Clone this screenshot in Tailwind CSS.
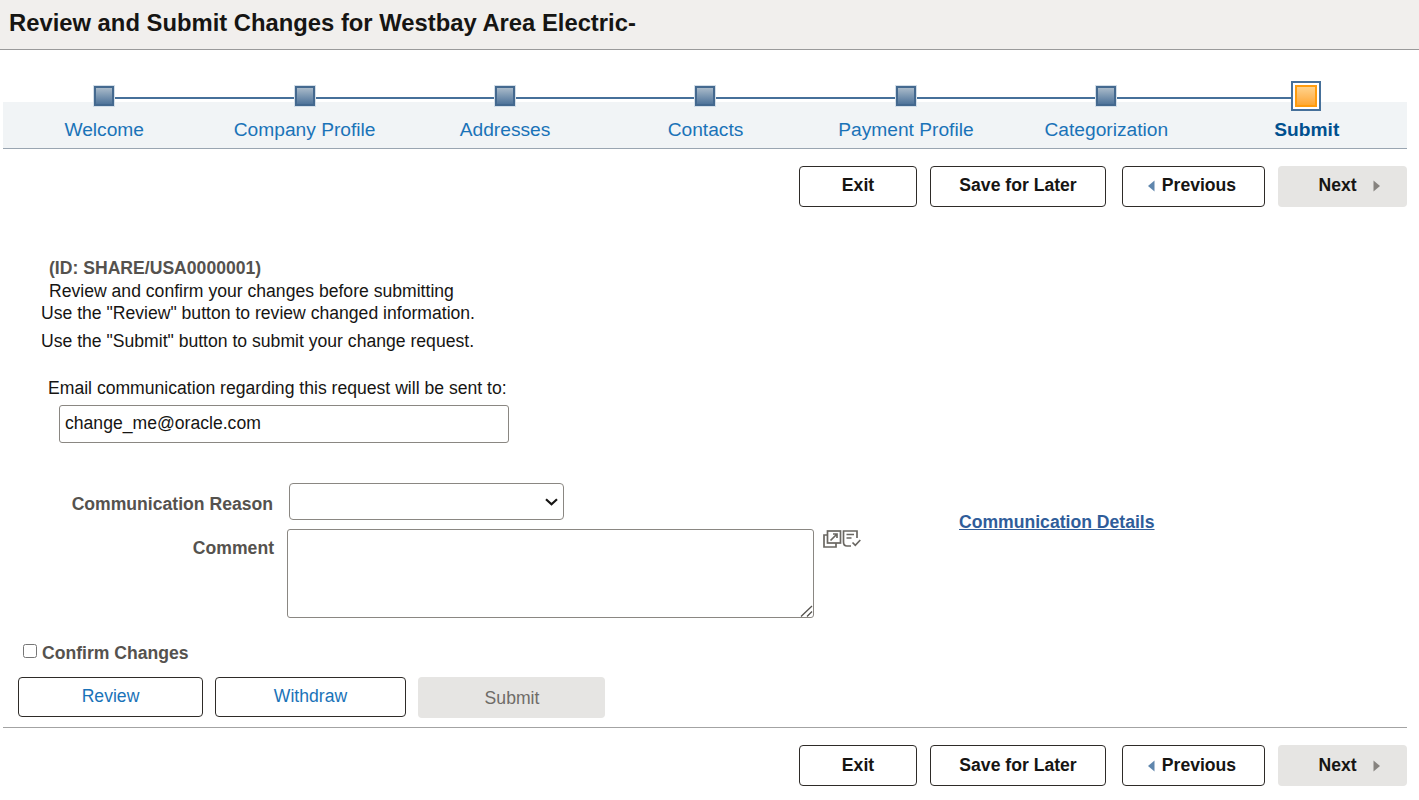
<!DOCTYPE html>
<html>
<head>
<meta charset="utf-8">
<script src="https://cdn.jsdelivr.net/npm/@tailwindcss/browser@4"></script>
</head>
<body class="bg-white font-['Liberation_Sans',Arial,sans-serif] text-[17.6px] text-[#161513] overflow-hidden">
<div class="w-[1419px] h-[800px] overflow-hidden">
  <header class="h-[50px] bg-[#f1efed] border-b border-[#9a9a9a] pl-[9px] pt-[8px]">
    <h1 class="text-[23.8px] leading-[30px] font-bold text-[#161513]">Review and Submit Changes for Westbay Area Electric-</h1>
  </header>

  <nav class="relative mt-[31px] ml-[3px] w-[1404px] h-[68px]">
    <div class="absolute left-0 right-0 top-[21px] bottom-0 bg-[#f1f4f6] border-b border-[#9aa5b1]"></div>
    <div class="absolute left-[101px] w-[1203px] top-[16px] h-[2px] bg-[#46709a]"></div>
    <ol class="relative grid grid-cols-7 ml-[1px] h-full">
      <li class="flex flex-col items-center"><span class="mt-[4px] w-[22px] h-[22px] border border-[#d3dee8] bg-[#44698f] p-[2px]"><span class="block w-full h-full bg-gradient-to-b from-[#a9bac9] to-[#4f749a]"></span></span><a class="mt-[12px] leading-[22px] text-[19.2px] text-[#1a73b8]">Welcome</a></li>
      <li class="flex flex-col items-center"><span class="mt-[4px] w-[22px] h-[22px] border border-[#d3dee8] bg-[#44698f] p-[2px]"><span class="block w-full h-full bg-gradient-to-b from-[#a9bac9] to-[#4f749a]"></span></span><a class="mt-[12px] leading-[22px] text-[19.2px] text-[#1a73b8]">Company Profile</a></li>
      <li class="flex flex-col items-center"><span class="mt-[4px] w-[22px] h-[22px] border border-[#d3dee8] bg-[#44698f] p-[2px]"><span class="block w-full h-full bg-gradient-to-b from-[#a9bac9] to-[#4f749a]"></span></span><a class="mt-[12px] leading-[22px] text-[19.2px] text-[#1a73b8]">Addresses</a></li>
      <li class="flex flex-col items-center"><span class="mt-[4px] w-[22px] h-[22px] border border-[#d3dee8] bg-[#44698f] p-[2px]"><span class="block w-full h-full bg-gradient-to-b from-[#a9bac9] to-[#4f749a]"></span></span><a class="mt-[12px] leading-[22px] text-[19.2px] text-[#1a73b8]">Contacts</a></li>
      <li class="flex flex-col items-center"><span class="mt-[4px] w-[22px] h-[22px] border border-[#d3dee8] bg-[#44698f] p-[2px]"><span class="block w-full h-full bg-gradient-to-b from-[#a9bac9] to-[#4f749a]"></span></span><a class="mt-[12px] leading-[22px] text-[19.2px] text-[#1a73b8]">Payment Profile</a></li>
      <li class="flex flex-col items-center"><span class="mt-[4px] w-[22px] h-[22px] border border-[#d3dee8] bg-[#44698f] p-[2px]"><span class="block w-full h-full bg-gradient-to-b from-[#a9bac9] to-[#4f749a]"></span></span><a class="mt-[12px] leading-[22px] text-[19.2px] text-[#1a73b8]">Categorization</a></li>
      <li class="flex flex-col items-center"><span class="-ml-[2px] w-[30px] h-[30px] border-[2px] border-[#46709a] bg-white p-[2px]"><span class="block w-full h-full border-[2px] border-[#ff9c0e] bg-gradient-to-b from-[#ffd28a] to-[#ffa82f]"></span></span><a class="mt-[8px] leading-[22px] text-[19.2px] font-bold text-[#00508f]">Submit</a></li>
    </ol>
  </nav>

  <div class="flex justify-end pr-[12px] mt-[17px] h-[41px] font-bold text-[#161513] text-[17.6px]">
    <button class="w-[118px] pb-[2px] rounded-[4px] border border-[#2e2b28] bg-white">Exit</button>
    <button class="ml-[13px] w-[176px] pb-[2px] rounded-[4px] border border-[#2e2b28] bg-white">Save for Later</button>
    <button class="ml-[16px] w-[143px] pb-[2px] pr-[4px] rounded-[4px] border border-[#2e2b28] bg-white flex items-center justify-center gap-[7px]"><svg width="8" height="12" viewBox="0 0 8 12"><path d="M7.5 0.5v11L1 6z" fill="#5f86ad"/></svg>Previous</button>
    <button class="ml-[13px] w-[129px] pl-[14px] pb-[2px] rounded-[4px] bg-[#e6e5e3] flex items-center justify-center gap-[16px]">Next<svg width="8" height="12" viewBox="0 0 8 12"><path d="M0.5 0.5v11L7 6z" fill="#86837f"/></svg></button>
  </div>

  <section class="mt-[50px] leading-[22px]">
    <p class="pl-[49px] font-bold text-[#55524e]">(ID: SHARE/USA0000001)</p>
    <p class="pl-[49px] mt-[1px]">Review and confirm your changes before submitting</p>
    <p class="pl-[41px]">Use the "Review" button to review changed information.</p>
    <p class="pl-[41px] mt-[6px]">Use the "Submit" button to submit your change request.</p>
    <p class="pl-[48px] mt-[25px]">Email communication regarding this request will be sent to:</p>
    <input class="block ml-[59px] mt-[6px] w-[450px] h-[38px] px-[5px] pb-[1px] rounded-[3px] border border-[#8a8782] text-[#161513] text-[17.6px]" value="change_me@oracle.com">
  </section>

  <section class="mt-[40px] flex items-start">
    <div class="w-[287px] shrink-0 font-bold text-[#55524e] text-right">
      <p class="pr-[14px] mt-[10px] leading-[22px]">Communication Reason</p>
      <p class="pr-[13px] mt-[22px] leading-[22px]">Comment</p>
    </div>
    <div class="w-[672px] shrink-0">
      <div class="relative ml-[2px] w-[275px] h-[37px]">
        <select class="block appearance-none w-full h-full rounded-[4px] border border-[#8a8782] bg-white"><option></option></select>
        <svg class="absolute left-[256px] top-[15px] pointer-events-none" width="13" height="8" viewBox="0 0 13 8" fill="none" stroke="#161513" stroke-width="2.2"><path d="M1 1.2l5.5 5 5.5-5"/></svg>
      </div>
      <div class="flex items-start mt-[9px]">
        <div class="relative w-[527px] h-[89px]">
          <textarea class="block resize-none w-full h-full rounded-[3px] border border-[#8a8782] bg-white"></textarea>
          <svg class="absolute right-[1px] bottom-[1px] pointer-events-none" width="13" height="12" viewBox="0 0 13 12" fill="none" stroke="#55524e" stroke-width="1.3"><path d="M1 11.5L12 1M7 11.5L12 6.5"/></svg>
        </div>
        <svg class="ml-[9px] mt-[1px]" width="38" height="18" viewBox="0 0 38 18" fill="none" stroke="#6a6762" stroke-width="1.7">
          <rect x="4.500" y="1" width="13" height="12"/>
          <path d="M4.500 5H1v12h12v-4"/>
          <path d="M7.500 10.500l6-6M10 4h4v4"/>
          <path d="M20.500 12V1h13.500v7M23.500 4.500h7.500M23.500 8h5M20.500 12c0 2.500 1 4 3.500 4h4"/>
          <path d="M29.500 12.500l2.800 2.800 5-5.300"/>
        </svg>
      </div>
    </div>
    <a class="mt-[28px] leading-[22px] font-bold text-[#2f5d9a] underline">Communication Details</a>
  </section>

  <label class="mt-[24px] ml-[23px] flex items-start h-[22px]">
    <input type="checkbox" class="w-[14px] h-[14px] mt-[2px]">
    <span class="ml-[5px] leading-[22px] font-bold text-[#55524e]">Confirm Changes</span>
  </label>

  <div class="flex items-start ml-[18px] mt-[13px] text-[#1a73b8]">
    <button class="w-[185px] h-[40px] rounded-[4px] border border-[#2e2b28] bg-white pb-[1px]">Review</button>
    <button class="ml-[12px] w-[191px] h-[40px] rounded-[4px] border border-[#2e2b28] bg-white pb-[1px]">Withdraw</button>
    <button class="ml-[12px] w-[187px] h-[41px] pt-[2px] pl-[1px] rounded-[4px] bg-[#e6e5e3] text-[#6f6c68]">Submit</button>
  </div>

  <div class="mt-[9px] ml-[3px] w-[1404px] h-px bg-[#a3a3a3]"></div>

  <div class="flex justify-end pr-[12px] mt-[17px] h-[41px] font-bold text-[#161513] text-[17.6px]">
    <button class="w-[118px] rounded-[4px] border border-[#2e2b28] bg-white">Exit</button>
    <button class="ml-[13px] w-[176px] rounded-[4px] border border-[#2e2b28] bg-white">Save for Later</button>
    <button class="ml-[16px] w-[143px] pr-[4px] rounded-[4px] border border-[#2e2b28] bg-white flex items-center justify-center gap-[7px]"><svg width="8" height="12" viewBox="0 0 8 12"><path d="M7.5 0.5v11L1 6z" fill="#5f86ad"/></svg>Previous</button>
    <button class="ml-[13px] w-[129px] pl-[14px] rounded-[4px] bg-[#e6e5e3] flex items-center justify-center gap-[16px]">Next<svg width="8" height="12" viewBox="0 0 8 12"><path d="M0.5 0.5v11L7 6z" fill="#86837f"/></svg></button>
  </div>
</div>
</body>
</html>
